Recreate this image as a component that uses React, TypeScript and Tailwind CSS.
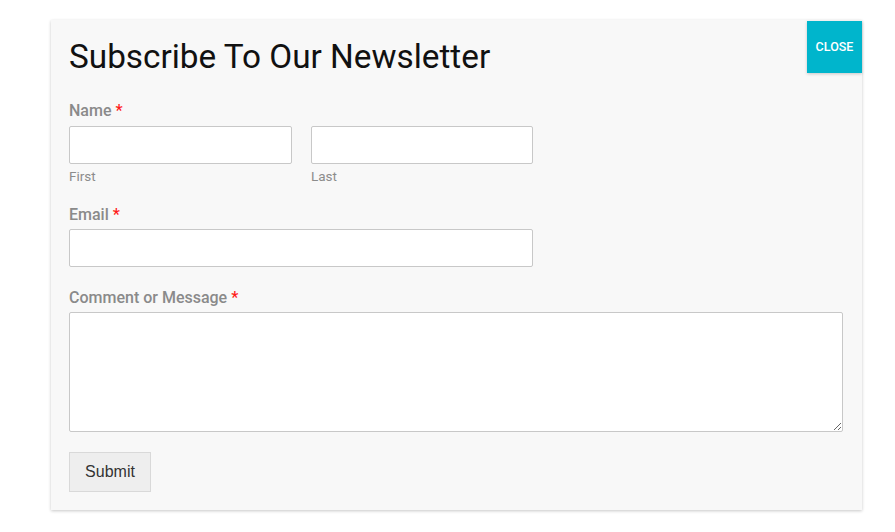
import React from "react";

export default function App() {
  const labelCls =
    "block h-[20px] text-[16px] leading-[20px] font-medium text-[#8a8a8a]";
  const inputCls =
    "block h-[38px] rounded-[2px] border border-[#c8c8c8] bg-white outline-none";
  return (
    <div
      className="min-h-[532px] w-[895px] bg-white pl-[51px] pt-[20px]"
      style={{ fontFamily: "Roboto, 'Open Sans', sans-serif" }}
    >
      <div className="relative w-[811px] bg-[#f8f8f8] px-[18px] pt-[18px] pb-[18px] shadow-[0_1px_3px_rgba(0,0,0,0.22)]">
        <button className="absolute right-0 top-[1px] flex h-[52px] w-[55px] items-center justify-center bg-[#00b5cc] text-[12.5px] font-medium text-white shadow-[0_1px_3px_rgba(0,0,0,0.2)]">
          CLOSE
        </button>
        <h2 className="h-[38px] text-[33.3px] leading-[38px] font-normal text-[#111111]">
          Subscribe To Our Newsletter
        </h2>

        <div className="mt-[25px]">
          <label className={labelCls}>
            Name <span className="text-[#ff1a1a]">*</span>
          </label>
          <div className="mt-[5px] flex gap-[19px]">
            <div className="w-[223px]">
              <input className={inputCls + " w-[223px]"} />
              <div className="mt-[3.5px] h-[16px] text-[13.5px] leading-[16px] text-[#8c8c8c]">
                First
              </div>
            </div>
            <div className="w-[222px]">
              <input className={inputCls + " w-[222px]"} />
              <div className="mt-[3.5px] h-[16px] text-[13.5px] leading-[16px] text-[#8c8c8c]">
                Last
              </div>
            </div>
          </div>
        </div>

        <div className="mt-[21px]">
          <label className={labelCls}>
            Email <span className="text-[#ff1a1a]">*</span>
          </label>
          <input className={inputCls + " mt-[4px] w-[464px]"} />
        </div>

        <div className="mt-[21px]">
          <label className={labelCls}>
            Comment or Message <span className="text-[#ff1a1a]">*</span>
          </label>
          <textarea className="mt-[4px] block h-[120px] w-[774px] rounded-[2px] border border-[#c8c8c8] bg-white outline-none" />
        </div>

        <button
          className="mt-[20px] block h-[40px] w-[82px] border border-[#d9d9d9] bg-[#eeeeee] text-[16px] text-[#333333]"
          style={{ fontFamily: "'Liberation Sans', Arial, sans-serif" }}
        >
          Submit
        </button>
      </div>
    </div>
  );
}
